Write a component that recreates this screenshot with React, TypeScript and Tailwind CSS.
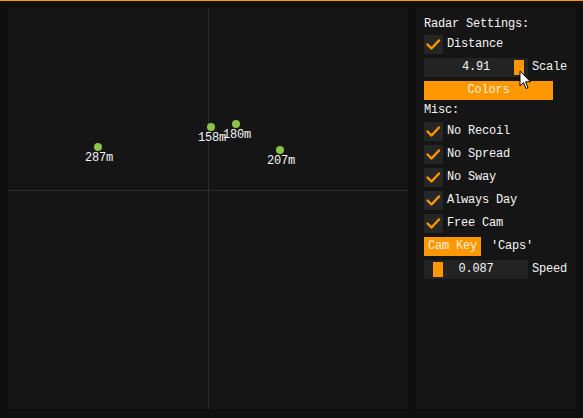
import React from "react";

const dots = [
  { x: 90, y: 139, label: "287m" },
  { x: 203, y: 119, label: "158m" },
  { x: 228, y: 116, label: "180m" },
  { x: 272, y: 142, label: "207m" },
];

function Check({ label }: { label: string }) {
  return (
    <div className="h-[19px] mb-1 flex items-center gap-1">
      <div className="w-[19px] h-[19px] bg-[#262626] flex items-center justify-center">
        <svg width="19" height="19" viewBox="0 0 19 19">
          <polyline
            points="3.5,9.5 7.5,13.5 15,5.5"
            fill="none"
            stroke="#ff9800"
            strokeWidth="2.4"
            strokeLinecap="round"
            strokeLinejoin="round"
          />
        </svg>
      </div>
      <span>{label}</span>
    </div>
  );
}

function Slider({ value, pos, label }: { value: string; pos: number; label: string }) {
  return (
    <div className="h-[19px] mb-1 flex items-center gap-1">
      <div className="relative w-[104px] h-[19px] bg-[#232323] flex items-center justify-center">
        <div
          className="absolute top-[2px] w-[10px] h-[15px] bg-[#ff9800]"
          style={{ left: pos }}
        />
        <span className="relative">{value}</span>
      </div>
      <span>{label}</span>
    </div>
  );
}

export default function App() {
  return (
    <div className="relative w-[583px] h-[418px] bg-[#0f0f0f] border-t border-[#ff9800] flex gap-2 pl-2 pt-[7px] font-['Liberation_Mono',monospace] text-[12px] tracking-[-0.2px] leading-[13px] text-[#f6f6f6]">
      <div className="relative w-[400px] h-[401px] bg-[#151515]">
        <div className="absolute left-[200px] top-0 w-px h-full bg-[#2c2c2c]" />
        <div className="absolute top-[182px] left-0 h-px w-full bg-[#2c2c2c]" />
        {dots.map((d) => (
          <React.Fragment key={d.label}>
            <div
              className="absolute w-[8px] h-[8px] rounded-full bg-[#8bc34a]"
              style={{ left: d.x - 4, top: d.y - 4 }}
            />
            <div
              className="absolute w-[40px] text-center"
              style={{ left: d.x - 19, top: d.y + 5 }}
            >
              {d.label}
            </div>
          </React.Fragment>
        ))}
      </div>
      <div className="w-[160px] h-[401px] bg-[#151515] pl-2 pt-[10px] flex flex-col">
        <div className="h-[13px] mb-1">Radar Settings:</div>
        <Check label="Distance" />
        <Slider value="4.91" pos={90} label="Scale" />
        <div className="w-[129px] h-[19px] mb-1 bg-[#ff9800] flex items-center justify-center text-[#fff1d6]">
          Colors
        </div>
        <div className="h-[14px] mb-1">Misc:</div>
        <Check label="No Recoil" />
        <Check label="No Spread" />
        <Check label="No Sway" />
        <Check label="Always Day" />
        <Check label="Free Cam" />
        <div className="h-[19px] mb-1 flex items-center">
          <div className="h-[19px] px-1 bg-[#ff9800] flex items-center text-[#fff1d6]">Cam Key</div>
          <span className="ml-[10px]">'Caps'</span>
        </div>
        <Slider value="0.087" pos={9} label="Speed" />
      </div>
      <svg
        className="absolute left-[519px] top-[69px]"
        width="13"
        height="21"
        viewBox="0 0 13 21"
      >
        <path
          d="M1,1 L1,16 L4.5,12.5 L7,18.5 L9,17.6 L6.6,11.8 L11.5,11.8 Z"
          fill="#ffffff"
          stroke="#000000"
          strokeWidth="1"
          strokeLinejoin="round"
        />
      </svg>
    </div>
  );
}
